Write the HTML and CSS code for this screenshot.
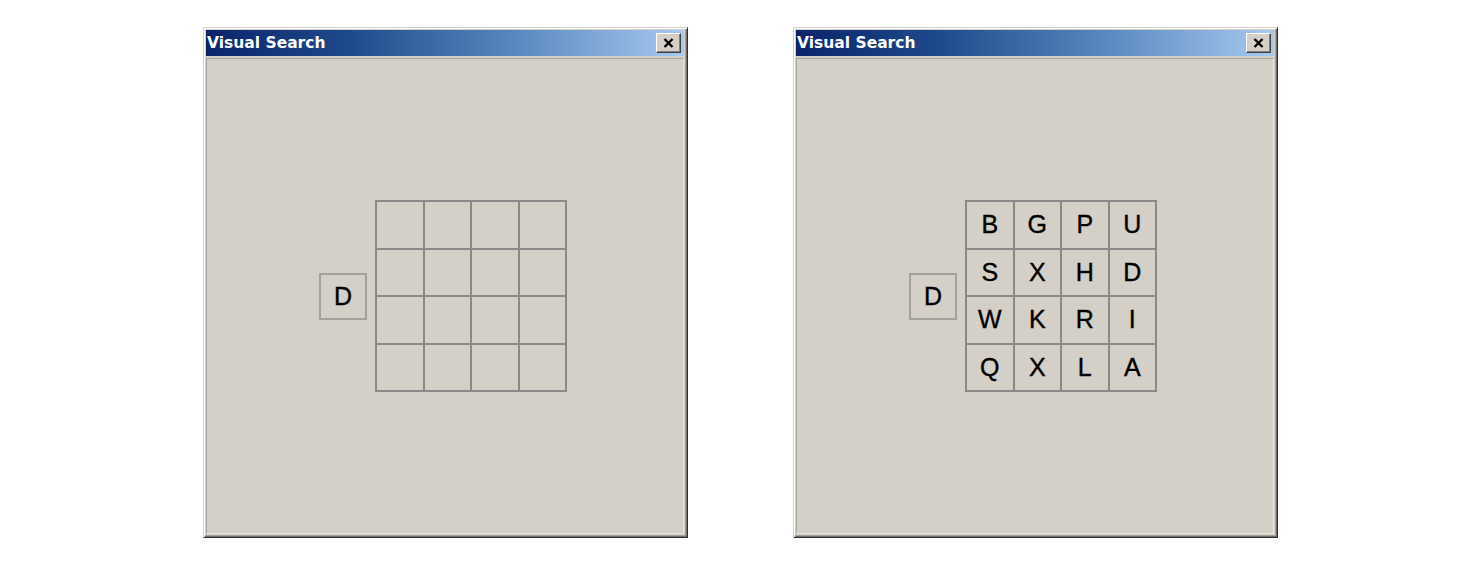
FILE: index.html
```html
<!DOCTYPE html>
<html>
<head>
<meta charset="utf-8">
<link rel="stylesheet" href="styles.css">
</head>
<body>
<div class="stage">
  <div class="window">
    <div class="titlebar">
      <span class="title">Visual Search</span>
      <button class="close"><svg width="11" height="10" viewBox="0 0 11 10"><path d="M1.5 1 L9.5 9 M9.5 1 L1.5 9" stroke="#000" stroke-width="2.4" fill="none"/></svg></button>
    </div>
    <div class="client">
      <div class="task">
        <div class="target">D</div>
        <div class="grid">
          <div class="cell"></div><div class="cell"></div><div class="cell"></div><div class="cell"></div>
          <div class="cell"></div><div class="cell"></div><div class="cell"></div><div class="cell"></div>
          <div class="cell"></div><div class="cell"></div><div class="cell"></div><div class="cell"></div>
          <div class="cell"></div><div class="cell"></div><div class="cell"></div><div class="cell"></div>
        </div>
      </div>
    </div>
  </div>
  <div class="window">
    <div class="titlebar">
      <span class="title">Visual Search</span>
      <button class="close"><svg width="11" height="10" viewBox="0 0 11 10"><path d="M1.5 1 L9.5 9 M9.5 1 L1.5 9" stroke="#000" stroke-width="2.4" fill="none"/></svg></button>
    </div>
    <div class="client">
      <div class="task">
        <div class="target">D</div>
        <div class="grid">
          <div class="cell">B</div><div class="cell">G</div><div class="cell">P</div><div class="cell">U</div>
          <div class="cell">S</div><div class="cell">X</div><div class="cell">H</div><div class="cell">D</div>
          <div class="cell">W</div><div class="cell">K</div><div class="cell">R</div><div class="cell">I</div>
          <div class="cell">Q</div><div class="cell">X</div><div class="cell">L</div><div class="cell">A</div>
        </div>
      </div>
    </div>
  </div>
</div>
</body>
</html>
```
FILE: styles.css
```css
html, body {
  margin: 0;
  padding: 0;
  background: #ffffff;
}
.stage {
  display: flex;
  gap: 105px;
  padding: 27px 0 0 203px;
}
.window {
  box-sizing: border-box;
  width: 485px;
  height: 511px;
  background: #d4d0c8;
  border: 1px solid;
  border-color: #d4d0c8 #303030 #303030 #d4d0c8;
  box-shadow: inset 1px 1px 0 #ffffff, inset -1px -1px 0 #707070, inset -2px -2px 0 #a0a0a0;
  padding: 2px 3px 3px 2px;
  display: flex;
  flex-direction: column;
}
.titlebar {
  height: 26px;
  flex: none;
  display: flex;
  align-items: center;
  justify-content: space-between;
  padding: 0 3px 0 1px;
  background: linear-gradient(to right, #0a246a 0%, #1e4a8c 30%, #5a88c0 65%, #a6caf0 100%);
}
.title {
  font-family: "DejaVu Sans", Verdana, sans-serif;
  font-weight: bold;
  font-size: 15.5px;
  color: #ffffff;
}
.close {
  box-sizing: border-box;
  width: 25px;
  height: 20px;
  padding: 0;
  margin: 0;
  background: #d4d0c8;
  border: 1px solid;
  border-color: #ffffff #404040 #404040 #ffffff;
  box-shadow: inset -1px -1px 0 #808080;
  display: flex;
  align-items: center;
  justify-content: center;
}
.client {
  flex: 1;
  margin-top: 2px;
  border: 1px solid;
  border-color: #a8a59e #e6e3dc #e6e3dc #a8a59e;
  display: flex;
  align-items: center;
  justify-content: center;
}
.task {
  display: flex;
  align-items: center;
  gap: 8px;
  margin-left: -4px;
}
.target {
  box-sizing: border-box;
  width: 48px;
  height: 47px;
  border: 2px solid #a3a19c;
  display: flex;
  align-items: center;
  justify-content: center;
  font-family: "Liberation Sans", Arial, sans-serif;
  font-size: 25px;
  color: #000;
  -webkit-text-stroke: 0.4px #000;
}
.grid {
  display: grid;
  grid-template-columns: repeat(4, 45.5px);
  grid-template-rows: repeat(4, 45.5px);
  gap: 2px;
  padding: 2px;
  background: #8a8987;
}
.cell {
  background: #d4d0c8;
  display: flex;
  align-items: center;
  justify-content: center;
  font-family: "Liberation Sans", Arial, sans-serif;
  font-size: 25px;
  color: #000;
  -webkit-text-stroke: 0.4px #000;
}
```
